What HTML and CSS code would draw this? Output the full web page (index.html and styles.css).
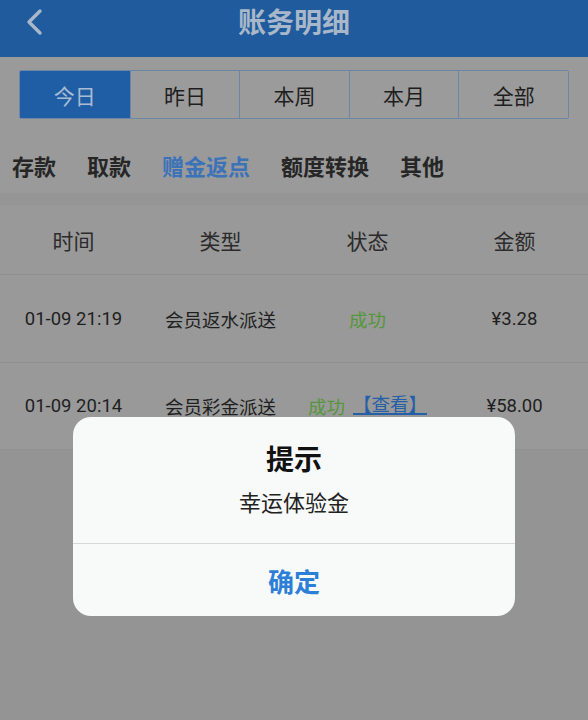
FILE: index.html
```html
<!DOCTYPE html>
<html lang="zh-CN">
<head>
<meta charset="utf-8">
<title>账务明细</title>
<link rel="stylesheet" href="styles.css">
</head>
<body>
<div class="app">
  <header class="topbar">
    <a class="back" href="#" aria-label="返回">
      <svg width="20" height="28" viewBox="0 0 20 28"><polyline points="14,3 3,14 14,25" fill="none" stroke="currentColor" stroke-width="3.4" stroke-linecap="round" stroke-linejoin="round"/></svg>
    </a>
    <h1 class="title">账务明细</h1>
  </header>

  <div class="tabs-wrap">
    <div class="tabs">
      <div class="tab active">今日</div>
      <div class="tab">昨日</div>
      <div class="tab">本周</div>
      <div class="tab">本月</div>
      <div class="tab">全部</div>
    </div>
  </div>

  <nav class="cats">
    <span class="cat">存款</span>
    <span class="cat">取款</span>
    <span class="cat active">赠金返点</span>
    <span class="cat">额度转换</span>
    <span class="cat">其他</span>
  </nav>

  <div class="band"></div>

  <div class="table">
    <div class="row head">
      <span>时间</span><span>类型</span><span>状态</span><span>金额</span>
    </div>
    <div class="row">
      <span>01-09 21:19</span><span>会员返水派送</span><span class="ok">成功</span><span>¥3.28</span>
    </div>
    <div class="row">
      <span>01-09 20:14</span><span>会员彩金派送</span><span class="status"><span class="ok">成功</span><a class="view" href="#">【查看】</a></span><span>¥58.00</span>
    </div>
  </div>
</div>

<div class="mask">
  <div class="dialog">
    <div class="dialog-title">提示</div>
    <div class="dialog-body">幸运体验金</div>
    <div class="dialog-btn">确定</div>
  </div>
</div>
</body>
</html>
```
FILE: styles.css
```css
* { box-sizing: border-box; }
html, body {
  margin: 0;
  padding: 0;
}
body {
  width: 588px;
  height: 720px;
  overflow: hidden;
  background: #939493;
  font-family: Roboto, "Noto Sans CJK SC", sans-serif;
  color: #1f1f1f;
}
.app {
  background: #939493;
}
.topbar {
  height: 57px;
  background: #1f5b9d;
  display: flex;
  align-items: center;
  justify-content: center;
  position: relative;
}
.back {
  position: absolute;
  left: 26px;
  top: 8px;
  color: #a9b7ca;
  display: block;
  line-height: 0;
}
.title {
  margin: 0;
  font-size: 28px;
  font-weight: 700;
  color: #a9b7ca;
  line-height: 40px;
  margin-top: -10px;
}
.tabs-wrap {
  background: #9a9a9a;
  padding: 13px 19px 0;
}
.tabs {
  display: grid;
  grid-template-columns: repeat(5, 1fr);
  height: 49px;
  border: 1px solid #6d86a6;
  border-radius: 2px;
  overflow: hidden;
}
.tab {
  display: flex;
  align-items: center;
  justify-content: center;
  font-size: 21px;
  color: #1e1e1e;
  background: #9b9b9b;
  border-left: 1px solid #6d86a6;
}
.tab:first-child { border-left: none; }
.tab.active {
  background: #1f5ea4;
  color: #a9bcd3;
}
.cats {
  background: #9a9a9a;
  display: flex;
  gap: 31px;
  padding: 34px 12px 10px;
}
.cat {
  font-size: 22px;
  line-height: 30px;
  font-weight: 700;
  color: #262626;
}
.cat.active { color: #3b72b8; }
.band {
  height: 12px;
  background: #949594;
}
.table {
  background: #999999;
}
.row {
  display: grid;
  grid-template-columns: repeat(4, 1fr);
  align-items: center;
  height: 88px;
  border-bottom: 1px solid #909090;
  font-size: 18.5px;
  color: #1f1f1f;
}
.row > span { text-align: center; white-space: nowrap; }
.row.head {
  height: 70px;
  font-size: 21px;
  color: #2b2b2b;
}
.row:last-child { height: 87px; }
.ok { color: #56963a; }
.status {
  display: flex;
  justify-content: center;
  align-items: center;
  gap: 8px;
}
.view {
  color: #2460a8;
  text-decoration: none;
  display: inline-block;
  line-height: 16px;
  border-bottom: 2px solid #2460a8;
}
.mask {
  position: fixed;
  inset: 0;
  display: flex;
  justify-content: center;
  align-items: flex-start;
  padding-top: 417px;
}
.dialog {
  width: 442px;
  height: 199px;
  background: #f8f9f9;
  border-radius: 18px;
  display: flex;
  flex-direction: column;
  align-items: stretch;
  text-align: center;
  padding-top: 25px;
}
.dialog-title {
  font-size: 28px;
  font-weight: 700;
  line-height: 38px;
  color: #111;
}
.dialog-body {
  font-size: 22px;
  line-height: 30px;
  margin-top: 9px;
  padding-bottom: 24px;
  color: #222;
  border-bottom: 1px solid #d8d8d8;
}
.dialog-btn {
  flex: 1;
  display: flex;
  align-items: center;
  justify-content: center;
  font-size: 26px;
  font-weight: 700;
  color: #2b7fd6;
}
```
